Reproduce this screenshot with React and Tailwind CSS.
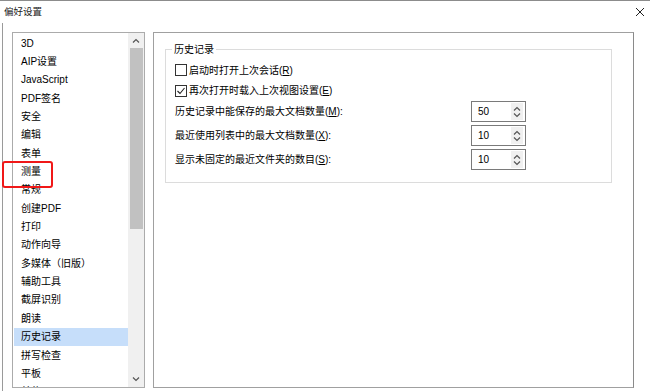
import React from "react";

const items = [
  "3D",
  "AIP设置",
  "JavaScript",
  "PDF签名",
  "安全",
  "编辑",
  "表单",
  "测量",
  "常规",
  "创建PDF",
  "打印",
  "动作向导",
  "多媒体（旧版）",
  "辅助工具",
  "截屏识别",
  "朗读",
  "历史记录",
  "拼写检查",
  "平板",
  "单位",
];

const font = { fontFamily: '"Liberation Sans", "Noto Sans CJK SC", sans-serif' };

const Chevron = ({ up, className }) => (
  <svg width="8" height="5" viewBox="0 0 8 5" className={className}>
    <path
      d={up ? "M1 4.5 L4 1.5 L7 4.5" : "M1 0.5 L4 3.5 L7 0.5"}
      fill="none"
      stroke="#555"
      strokeWidth="1.2"
    />
  </svg>
);

const Checkbox = ({ checked }) => (
  <span className="w-[12px] h-[12px] border border-[#333] bg-white flex items-center justify-center shrink-0">
    {checked && (
      <svg width="10" height="10" viewBox="0 0 10 10">
        <path d="M1.5 5 L4 7.5 L8.5 2" fill="none" stroke="#222" strokeWidth="1.1" />
      </svg>
    )}
  </span>
);

const Spin = ({ value }) => (
  <div className="w-[55px] h-[21px] border border-[#7a7a7a] bg-white flex items-stretch">
    <span className="flex-1 pl-[6px] flex items-center text-[10px]">{value}</span>
    <div className="w-[12px] my-[1px] mr-[2px] bg-[#f0f0f0] flex flex-col items-center justify-center gap-[2px]">
      <Chevron up />
      <Chevron />
    </div>
  </div>
);

const App = () => {
  return (
    <div
      className="relative w-[650px] h-[391px] bg-white border-t border-[#8c8c8c] overflow-hidden text-black"
      style={font}
    >
      {/* TITLE BAR */}
      <div className="h-[22px] flex items-center justify-between pl-[4px] pr-[5px]">
        <span className="text-[9.5px] text-[#222]">偏好设置</span>
        <svg width="10" height="10" viewBox="0 0 10 10">
          <path d="M1 1 L9 9 M9 1 L1 9" stroke="#222" strokeWidth="1" />
        </svg>
      </div>

      <div className="ml-[2px] h-[368px] border-l border-[#9a9a9a] flex pt-[9px] pl-[9px]">
        {/* CATEGORY LIST */}
        <div className="w-[133px] h-[356px] border border-[#ababab] flex overflow-hidden">
          <div className="flex-1 pt-[1px] pl-[1px] overflow-hidden">
            {items.map((it) => (
              <div
                key={it}
                className={
                  "h-[18.35px] pl-[7px] flex items-center text-[10px] whitespace-nowrap " +
                  (it === "历史记录" ? "bg-[#c6defa]" : "")
                }
              >
                {it}
              </div>
            ))}
          </div>
          <div className="w-[16px] bg-[#f0f0f0] flex flex-col items-center">
            <div className="h-[15px] flex items-center justify-center">
              <Chevron up />
            </div>
            <div className="w-[13px] h-[181px] bg-[#c1c1c1]" />
            <div className="flex-1" />
            <div className="h-[15px] flex items-center justify-center">
              <Chevron />
            </div>
          </div>
        </div>

        {/* SETTINGS PANEL */}
        <div className="ml-[8px] w-[481px] h-[356px] border border-[#a0a0a0] border-r-[#8a8a8a] pl-[11px] pt-[10px]">
          <fieldset className="w-[447px] h-[140px] border border-[#dcdcdc] pl-[9px]">
            <legend className="ml-[-3px] px-[2px] text-[10px] leading-[13px]">历史记录</legend>
            <div className="text-[10px]">
              <div className="h-[20px] mt-[4px] flex items-center gap-[2px]">
                <Checkbox />
                <span>
                  启动时打开上次会话(<span className="underline">R</span>)
                </span>
              </div>
              <div className="h-[21px] flex items-center gap-[2px]">
                <Checkbox checked />
                <span>
                  再次打开时载入上次视图设置(<span className="underline">E</span>)
                </span>
              </div>
              <div className="flex items-center">
                <span className="w-[296px]">
                  历史记录中能保存的最大文档数量(<span className="underline">M</span>):
                </span>
                <Spin value="50" />
              </div>
              <div className="mt-[3px] flex items-center">
                <span className="w-[296px]">
                  最近使用列表中的最大文档数量(<span className="underline">X</span>):
                </span>
                <Spin value="10" />
              </div>
              <div className="mt-[3px] flex items-center">
                <span className="w-[296px]">
                  显示未固定的最近文件夹的数目(<span className="underline">S</span>):
                </span>
                <Spin value="10" />
              </div>
            </div>
          </fieldset>
        </div>
      </div>

      {/* RED ANNOTATION */}
      <div className="absolute left-[2px] top-[160px] w-[51px] h-[27px] border-2 border-[#f01818] rounded-[3px]" />
    </div>
  );
};

export default App;
